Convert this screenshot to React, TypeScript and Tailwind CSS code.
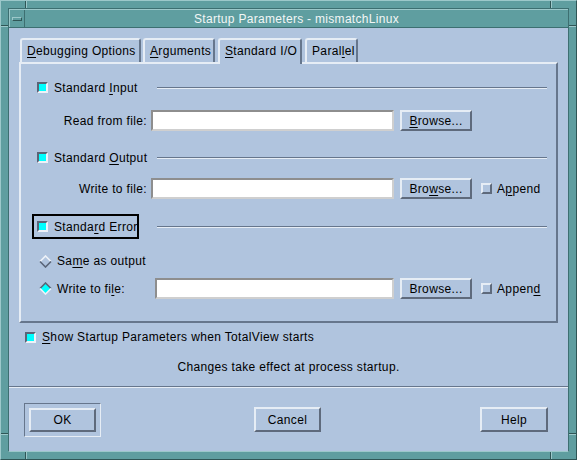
import React from "react";

function M({ children }: { children: React.ReactNode }) {
  return <span className="underline underline-offset-[2px] decoration-1">{children}</span>;
}

function Check({ on }: { on?: boolean }) {
  if (on) {
    return (
      <span className="block w-[11px] h-[11px] shrink-0 border-2 border-t-[#5a6578] border-l-[#5a6578] border-b-[#eef2f8] border-r-[#eef2f8] bg-[#00ffff]" />
    );
  }
  return (
    <span className="block w-[11px] h-[11px] shrink-0 border-2 border-t-[#e6edf5] border-l-[#e6edf5] border-b-[#5e6a7c] border-r-[#5e6a7c] bg-[#b0c4de]" />
  );
}

function Diamond({ on }: { on?: boolean }) {
  return (
    <svg width="13" height="13" viewBox="0 0 13 13" className="shrink-0">
      <polygon points="6.5,1 12,6.5 6.5,12 1,6.5" fill={on ? "#00ffff" : "#b0c4de"} />
      <polyline
        points="1,6.5 6.5,1 12,6.5"
        fill="none"
        stroke={on ? "#5a6578" : "#eef2f8"}
        strokeWidth="1.6"
      />
      <polyline
        points="1,6.5 6.5,12 12,6.5"
        fill="none"
        stroke={on ? "#eef2f8" : "#5a6578"}
        strokeWidth="1.6"
      />
    </svg>
  );
}

function Button({ children, w, h }: { children: React.ReactNode; w: string; h: string }) {
  return (
    <div
      className={`${w} ${h} shrink-0 border-2 border-t-[#e6edf5] border-l-[#e6edf5] border-b-[#5e6a7c] border-r-[#5e6a7c] flex items-center justify-center bg-[#b0c4de]`}
    >
      {children}
    </div>
  );
}

function Input({ w }: { w: string }) {
  return (
    <div
      className={`${w} h-[21px] shrink-0 bg-white border-2 border-t-[#8e8e8e] border-l-[#8e8e8e] border-b-[#cfcfcf] border-r-[#cfcfcf]`}
    />
  );
}

function Etch() {
  return <div className="flex-1 ml-[18px] mr-[9px] h-[2px] border-t border-t-[#66768c] border-b border-b-[#e6edf5]" />;
}

function Header({ children, focus }: { children: React.ReactNode; focus?: boolean }) {
  return (
    <div className="h-[25px] flex items-center">
      <div
        className={`ml-[11px] w-[107px] shrink-0 h-[25px] border-2 ${
          focus ? "border-black" : "border-transparent"
        } pl-[3px] flex items-center gap-[6px] whitespace-nowrap`}
      >
        <Check on />
        <span>{children}</span>
      </div>
      <Etch />
    </div>
  );
}

function Tab({
  children,
  w,
  selected,
  ml,
}: {
  children: React.ReactNode;
  w: string;
  selected?: boolean;
  ml: string;
}) {
  return (
    <div
      className={`${w} ${ml} border-t-2 border-l-2 border-r-2 border-t-[#e6edf5] border-l-[#e6edf5] border-r-[#66768c] rounded-t-[3px] flex items-center pl-[5px] whitespace-nowrap ${
        selected ? "h-[26px] -mb-[2px] relative z-10 bg-[#b0c4de] pb-[2px]" : "h-[24px]"
      }`}
    >
      {children}
    </div>
  );
}

export default function App() {
  return (
    <div className="w-[577px] h-[460px] relative bg-[#5f9ea0] border border-t-[#9cc8ca] border-l-[#9cc8ca] border-b-[#2f5656] border-r-[#2f5656] p-[7px] font-['Liberation_Sans',Arial,sans-serif] text-[12px] leading-none tracking-[0.35px] text-black">
      {/* frame resize-handle separators */}
      <div className="absolute left-[24px] top-0 w-[1px] h-[7px] bg-[#2f5656]" />
      <div className="absolute left-[25px] top-0 w-[1px] h-[7px] bg-[#9cc8ca]" />
      <div className="absolute left-[549px] top-0 w-[1px] h-[7px] bg-[#2f5656]" />
      <div className="absolute left-[550px] top-0 w-[1px] h-[7px] bg-[#9cc8ca]" />
      <div className="absolute left-0 top-[24px] w-[7px] h-[1px] bg-[#2f5656]" />
      <div className="absolute left-0 top-[25px] w-[7px] h-[1px] bg-[#9cc8ca]" />
      <div className="absolute right-0 top-[24px] w-[7px] h-[1px] bg-[#2f5656]" />
      <div className="absolute right-0 top-[25px] w-[7px] h-[1px] bg-[#9cc8ca]" />
      <div className="absolute left-0 top-[432px] w-[7px] h-[1px] bg-[#2f5656]" />
      <div className="absolute left-0 top-[433px] w-[7px] h-[1px] bg-[#9cc8ca]" />
      <div className="absolute right-0 top-[432px] w-[7px] h-[1px] bg-[#2f5656]" />
      <div className="absolute right-0 top-[433px] w-[7px] h-[1px] bg-[#9cc8ca]" />
      <div className="absolute left-[24px] bottom-0 w-[1px] h-[7px] bg-[#2f5656]" />
      <div className="absolute left-[25px] bottom-0 w-[1px] h-[7px] bg-[#9cc8ca]" />
      <div className="absolute left-[549px] bottom-0 w-[1px] h-[7px] bg-[#2f5656]" />
      <div className="absolute left-[550px] bottom-0 w-[1px] h-[7px] bg-[#9cc8ca]" />

      <div className="h-full flex flex-col border border-t-[#3d6f71] border-l-[#3d6f71] border-r-[#3d6f71] border-b-[#9cc8ca]">
        {/* title bar */}
        <div className="h-[19px] shrink-0 flex bg-[#5f9ea0] border-t border-b border-t-[#9cc8ca] border-b-[#3d6f71]">
          <div className="w-[16px] flex items-center justify-center border-r border-r-[#3d6f71] border-l border-l-[#9cc8ca]">
            <div className="w-[10px] h-[4px] border border-t-[#9cc8ca] border-l-[#9cc8ca] border-b-[#2f5656] border-r-[#2f5656]" />
          </div>
          <div className="flex-1 flex items-center justify-center text-[#f2f6f6] tracking-[0.3px] whitespace-nowrap">
            Startup Parameters - mismatchLinux
          </div>
        </div>

        {/* body */}
        <div className="flex-1 bg-[#b0c4de] flex flex-col">
          <div className="h-[358px] shrink-0 px-[10px] pt-[10px] flex flex-col">
            {/* tabs */}
            <div className="flex items-end h-[24px] shrink-0">
              <Tab w="w-[121px]" ml="ml-[1px]">
                <span>
                  <M>D</M>ebugging Options
                </span>
              </Tab>
              <Tab w="w-[72px]" ml="ml-[2px]">
                <span>
                  <M>A</M>rguments
                </span>
              </Tab>
              <Tab w="w-[84px]" ml="ml-[3px]" selected>
                <span>
                  <M>S</M>tandard I/O
                </span>
              </Tab>
              <Tab w="w-[53px]" ml="ml-[3px]">
                <span>
                  Paral<M>l</M>el
                </span>
              </Tab>
            </div>

            {/* panel */}
            <div className="h-[261px] shrink-0 border-2 border-t-[#e6edf5] border-l-[#e6edf5] border-b-[#66768c] border-r-[#66768c] flex flex-col">
              <div className="mt-[11px]">
                <Header>
                  Standard <M>I</M>nput
                </Header>
              </div>
              <div className="mt-[10px] h-[21px] flex items-center">
                <div className="w-[126px] text-right whitespace-nowrap">Read from file:</div>
                <div className="ml-[4px]">
                  <Input w="w-[243px]" />
                </div>
                <div className="ml-[6px]">
                  <Button w="w-[72px]" h="h-[21px]">
                    <span>
                      <M>B</M>rowse...
                    </span>
                  </Button>
                </div>
              </div>

              <div className="mt-[14px]">
                <Header>
                  Standard <M>O</M>utput
                </Header>
              </div>
              <div className="mt-[8px] h-[21px] flex items-center">
                <div className="w-[126px] text-right whitespace-nowrap">Write to file:</div>
                <div className="ml-[4px]">
                  <Input w="w-[243px]" />
                </div>
                <div className="ml-[6px]">
                  <Button w="w-[72px]" h="h-[21px]">
                    <span>
                      Bro<M>w</M>se...
                    </span>
                  </Button>
                </div>
                <div className="ml-[9px] flex items-center gap-[5px]">
                  <Check />
                  <span>
                    A<M>p</M>pend
                  </span>
                </div>
              </div>

              <div className="mt-[15px]">
                <Header focus>
                  Standa<M>r</M>d Error
                </Header>
              </div>
              <div className="mt-[13px] h-[18px] flex items-center pl-[18px] gap-[5px]">
                <Diamond />
                <span>
                  Sa<M>m</M>e as output
                </span>
              </div>
              <div className="mt-[8px] h-[21px] flex items-center pl-[18px]">
                <Diamond on />
                <div className="ml-[5px] w-[98px] whitespace-nowrap">
                  Write to fi<M>l</M>e:
                </div>
                <Input w="w-[239px]" />
                <div className="ml-[6px]">
                  <Button w="w-[72px]" h="h-[21px]">
                    <span>Browse...</span>
                  </Button>
                </div>
                <div className="ml-[9px] flex items-center gap-[5px]">
                  <Check />
                  <span>
                    Appen<M>d</M>
                  </span>
                </div>
              </div>
            </div>

            <div className="mt-[6px] h-[16px] flex items-center ml-[6px] gap-[6px]">
              <Check on />
              <span>
                <M>S</M>how Startup Parameters when TotalView starts
              </span>
            </div>
            <div className="mt-[14px] h-[16px] flex items-center justify-center">
              Changes take effect at process startup.
            </div>
          </div>

          <div className="h-[2px] shrink-0 border-t border-t-[#66768c] border-b border-b-[#e6edf5]" />

          <div className="flex-1 flex items-center pl-[15px]">
            <div className="w-[77px] h-[34px] shrink-0 border border-t-[#66768c] border-l-[#66768c] border-b-[#e6edf5] border-r-[#e6edf5] p-[4px]">
              <Button w="w-full" h="h-full">
                OK
              </Button>
            </div>
            <div className="ml-[153px]">
              <Button w="w-[67px]" h="h-[25px]">
                Cancel
              </Button>
            </div>
            <div className="ml-[159px]">
              <Button w="w-[68px]" h="h-[25px]">
                Help
              </Button>
            </div>
          </div>
        </div>
      </div>
    </div>
  );
}
